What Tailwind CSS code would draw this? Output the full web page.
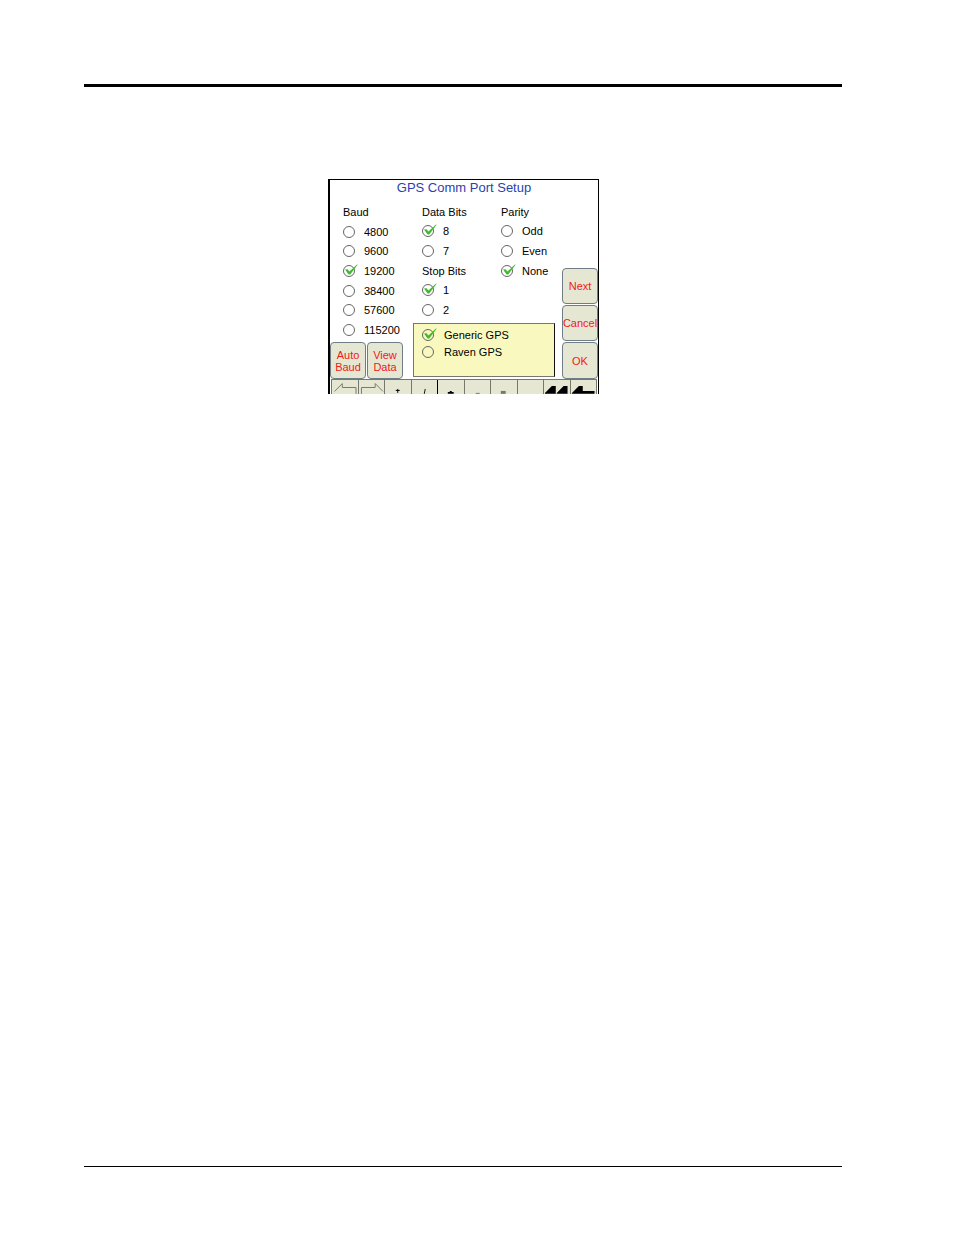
<!DOCTYPE html>
<html lang="en">
<head>
<meta charset="utf-8">
<meta name="viewport" content="width=device-width, initial-scale=1">
<title>GPS Comm Port Setup</title>
<script src="https://cdn.jsdelivr.net/npm/@tailwindcss/browser@4"></script>
</head>
<body class="bg-white text-black">
<svg class="hidden" aria-hidden="true">
  <symbol id="tick" viewBox="0 0 16 14"><path d="M2 5.6 L4.6 5.2 L6.4 7.6 L14 0.4 L14.6 0.8 L7.2 10.6 L5.6 10.6 Z" fill="#3dbb2c"/></symbol>
</svg>
<div class="flex min-h-screen flex-col pt-[84px] pr-28 pb-[68px] pl-[84px] font-['Liberation_Sans',Arial,sans-serif] text-[11px] leading-3">
  <hr class="border-0 border-t-3 border-black">
  <main class="flex-1 pt-23 pl-61">
    <form class="flex h-[215px] w-[271px] flex-col overflow-hidden border-t border-r border-l-2 border-black">
      <h1 class="text-center text-[13px] leading-4 text-[#2b3fae]">GPS Comm Port Setup</h1>
      <div class="mt-1.5 flex h-[177px] shrink-0">
        <div class="flex w-[83px] flex-col">
          <div class="grid h-[138px] grid-rows-7 items-center pl-[13px]" role="group" aria-label="Baud rate">
            <span>Baud</span>
            <label class="relative flex items-center gap-[9px]"><input type="radio" name="baud" class="peer size-3 shrink-0 appearance-none rounded-full border border-[#666]"><svg class="absolute left-0 hidden h-3.5 w-4 peer-checked:block"><use href="#tick"/></svg>4800</label>
            <label class="relative flex items-center gap-[9px]"><input type="radio" name="baud" class="peer size-3 shrink-0 appearance-none rounded-full border border-[#666]"><svg class="absolute left-0 hidden h-3.5 w-4 peer-checked:block"><use href="#tick"/></svg>9600</label>
            <label class="relative flex items-center gap-[9px]"><input type="radio" name="baud" checked class="peer size-3 shrink-0 appearance-none rounded-full border border-[#666]"><svg class="absolute left-0 hidden h-3.5 w-4 peer-checked:block"><use href="#tick"/></svg>19200</label>
            <label class="relative flex items-center gap-[9px]"><input type="radio" name="baud" class="peer size-3 shrink-0 appearance-none rounded-full border border-[#666]"><svg class="absolute left-0 hidden h-3.5 w-4 peer-checked:block"><use href="#tick"/></svg>38400</label>
            <label class="relative flex items-center gap-[9px]"><input type="radio" name="baud" class="peer size-3 shrink-0 appearance-none rounded-full border border-[#666]"><svg class="absolute left-0 hidden h-3.5 w-4 peer-checked:block"><use href="#tick"/></svg>57600</label>
            <label class="relative flex items-center gap-[9px]"><input type="radio" name="baud" class="peer size-3 shrink-0 appearance-none rounded-full border border-[#666]"><svg class="absolute left-0 hidden h-3.5 w-4 peer-checked:block"><use href="#tick"/></svg>115200</label>
          </div>
          <div class="mt-auto flex gap-px">
            <button type="button" class="h-[37px] w-9 rounded-[4px] border border-[#6f7d86] bg-[#e6e7d3] text-[#f01818]">Auto<br>Baud</button>
            <button type="button" class="h-[37px] w-9 rounded-[4px] border border-[#6f7d86] bg-[#e6e7d3] text-[#f01818]">View<br>Data</button>
          </div>
        </div>
        <div class="flex w-[142px] flex-col">
          <div class="grid h-[118px] grid-cols-[79px_1fr] pl-[9px]">
            <div class="grid grid-rows-6 items-center" role="group" aria-label="Data and stop bits">
              <span>Data Bits</span>
              <label class="relative flex items-center gap-[9px]"><input type="radio" name="data" checked class="peer size-3 shrink-0 appearance-none rounded-full border border-[#666]"><svg class="absolute left-0 hidden h-3.5 w-4 peer-checked:block"><use href="#tick"/></svg>8</label>
              <label class="relative flex items-center gap-[9px]"><input type="radio" name="data" class="peer size-3 shrink-0 appearance-none rounded-full border border-[#666]"><svg class="absolute left-0 hidden h-3.5 w-4 peer-checked:block"><use href="#tick"/></svg>7</label>
              <span>Stop Bits</span>
              <label class="relative flex items-center gap-[9px]"><input type="radio" name="stop" checked class="peer size-3 shrink-0 appearance-none rounded-full border border-[#666]"><svg class="absolute left-0 hidden h-3.5 w-4 peer-checked:block"><use href="#tick"/></svg>1</label>
              <label class="relative flex items-center gap-[9px]"><input type="radio" name="stop" class="peer size-3 shrink-0 appearance-none rounded-full border border-[#666]"><svg class="absolute left-0 hidden h-3.5 w-4 peer-checked:block"><use href="#tick"/></svg>2</label>
            </div>
            <div class="grid grid-rows-6 items-center" role="group" aria-label="Parity">
              <span>Parity</span>
              <label class="relative flex items-center gap-[9px]"><input type="radio" name="parity" class="peer size-3 shrink-0 appearance-none rounded-full border border-[#666]"><svg class="absolute left-0 hidden h-3.5 w-4 peer-checked:block"><use href="#tick"/></svg>Odd</label>
              <label class="relative flex items-center gap-[9px]"><input type="radio" name="parity" class="peer size-3 shrink-0 appearance-none rounded-full border border-[#666]"><svg class="absolute left-0 hidden h-3.5 w-4 peer-checked:block"><use href="#tick"/></svg>Even</label>
              <label class="relative flex items-center gap-[9px]"><input type="radio" name="parity" checked class="peer size-3 shrink-0 appearance-none rounded-full border border-[#666]"><svg class="absolute left-0 hidden h-3.5 w-4 peer-checked:block"><use href="#tick"/></svg>None</label>
            </div>
          </div>
          <div class="mt-[3px] flex h-[54px] flex-col gap-[5px] border border-t-[#77776c] border-r-[#111] border-b-[#77776c] border-l-[#77776c] bg-[#f9f8be] pt-[5px] pl-2" role="group" aria-label="GPS type">
            <label class="relative flex items-center gap-2.5"><input type="radio" name="gps" checked class="peer size-3 shrink-0 appearance-none rounded-full border border-[#666]"><svg class="absolute left-0 hidden h-3.5 w-4 peer-checked:block"><use href="#tick"/></svg>Generic GPS</label>
            <label class="relative flex items-center gap-2.5"><input type="radio" name="gps" class="peer size-3 shrink-0 appearance-none rounded-full border border-[#666]"><svg class="absolute left-0 hidden h-3.5 w-4 peer-checked:block"><use href="#tick"/></svg>Raven GPS</label>
          </div>
        </div>
        <div class="ml-auto flex w-9 flex-col justify-end gap-px">
          <button type="button" class="h-9 rounded-[4px] border border-[#6f7d86] bg-[#e6e7d3] text-[#f01818]">Next</button>
          <button type="button" class="flex h-9 items-center justify-center rounded-[4px] border border-[#6f7d86] bg-[#e6e7d3] text-[#f01818]">Cancel</button>
          <button type="submit" class="h-[37px] rounded-[4px] border border-[#6f7d86] bg-[#e6e7d3] text-[#f01818]">OK</button>
        </div>
      </div>
      <div class="mx-px grid flex-1 grid-cols-10 border-t border-r border-[#77776c] bg-[#e6e7d3]">
        <button type="button" aria-label="Left" class="border-l border-[#77776c]"><svg class="h-3.5 w-full" viewBox="0 0 26 14" fill="none" stroke="#77776c"><path d="M2.5 11.5 L10.5 3.5 V7.5 H24.5 V14"/></svg></button>
        <button type="button" aria-label="Right" class="border-l border-[#77776c]"><svg class="h-3.5 w-full" viewBox="0 0 26 14" fill="none" stroke="#77776c"><path d="M24.5 11.5 L16.5 3.5 V7.5 H2.5 V14"/></svg></button>
        <button type="button" aria-label="Asterisk" class="border-l border-[#77776c]"><svg class="h-3.5 w-full" viewBox="0 0 26 14" stroke="#000"><path d="M13 9 V13 M11 10.5 H15"/></svg></button>
        <button type="button" aria-label="Slash" class="border-l border-[#77776c]"><svg class="h-3.5 w-full" viewBox="0 0 26 14" stroke="#111"><path d="M13.5 9 L12.5 14"/></svg></button>
        <button type="button" aria-label="Plus" class="border-l border-black"><svg class="h-3.5 w-full" viewBox="0 0 26 14"><path d="M12 11 H14 V12 H16 V14 H10 V12 H12 Z"/></svg></button>
        <button type="button" aria-label="Minus" class="border-l border-[#77776c]"><svg class="h-3.5 w-full" viewBox="0 0 26 14"><path d="M11 13 H15 V14 H11 Z" fill="#77776c"/></svg></button>
        <button type="button" aria-label="Equals" class="border-l border-[#77776c]"><svg class="h-3.5 w-full" viewBox="0 0 26 14"><path d="M10 11 H15 V14 H10 Z" fill="#77776c"/></svg></button>
        <button type="button" aria-label="Space" class="border-l border-[#77776c]"></button>
        <button type="button" aria-label="Delete all" class="border-l border-[#77776c]"><svg class="h-3.5 w-full" viewBox="0 0 26 14"><path d="M1 13 L8 6 H12 V14 H1 Z M13 13 L20 6 H24 V14 H13 Z"/></svg></button>
        <button type="button" aria-label="Delete" class="border-l border-[#77776c]"><svg class="h-3.5 w-full" viewBox="0 0 26 14"><path d="M1 13 L8 6 H12 V11 H24 V14 H1 Z"/></svg></button>
      </div>
    </form>
  </main>
  <hr class="border-0 border-t border-black">
</div>
</body>
</html>
